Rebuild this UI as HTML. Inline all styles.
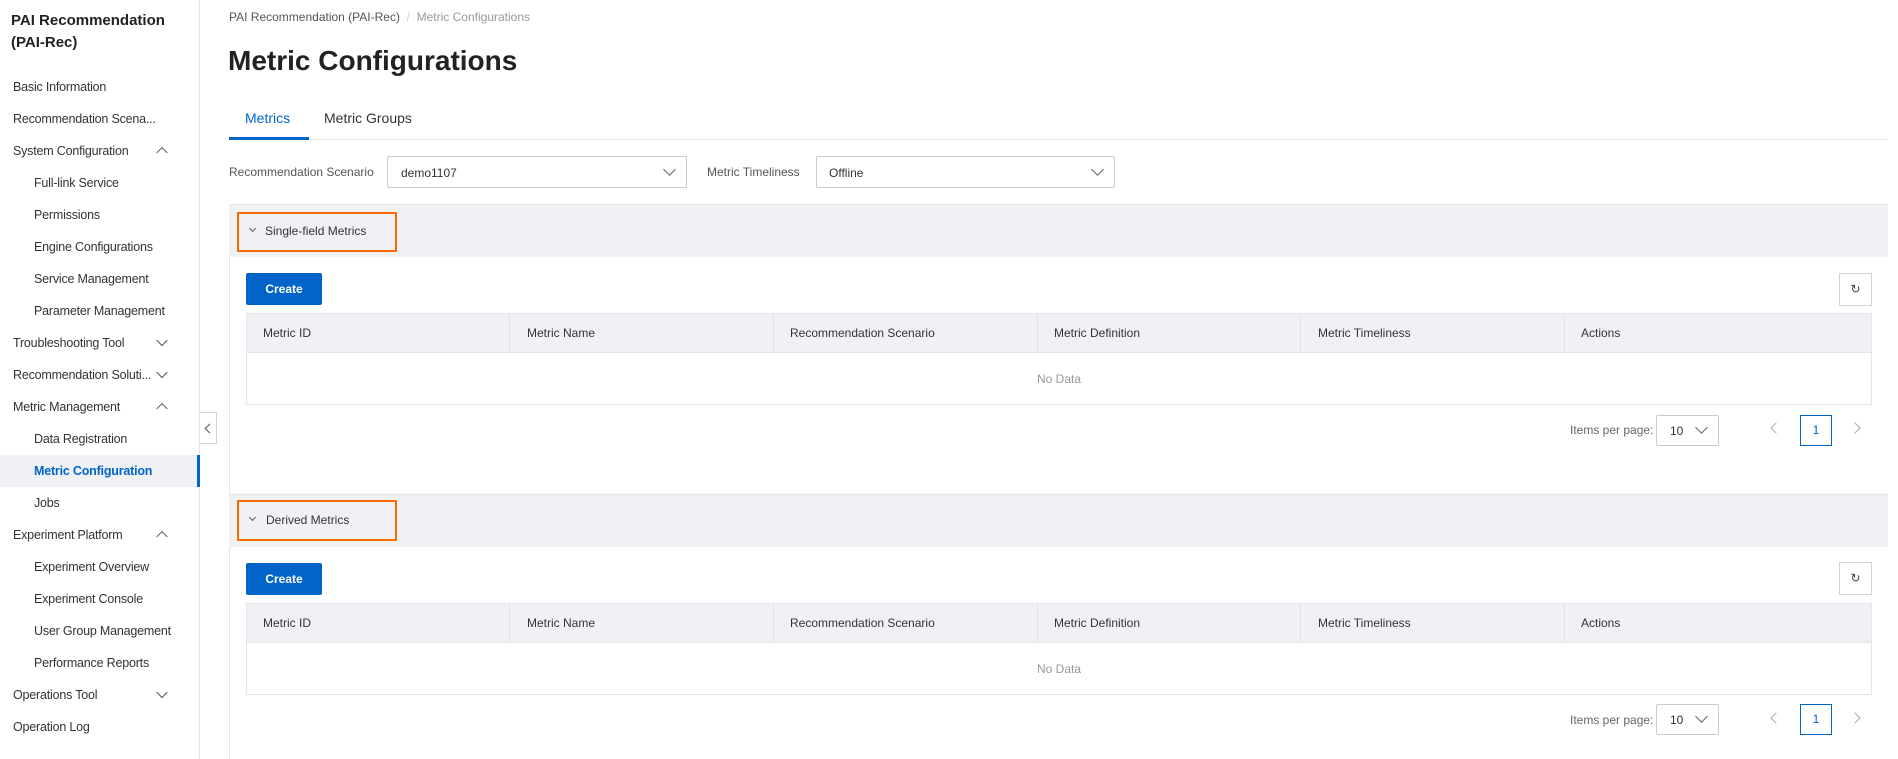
<!DOCTYPE html>
<html><head><meta charset="utf-8"><style>
*{box-sizing:border-box;margin:0;padding:0}
body{width:1898px;height:759px;overflow:hidden;background:#fff;font-family:"Liberation Sans",sans-serif;color:#333;font-size:12px;position:relative}
.abs{position:absolute}
.side{left:0;top:0;width:200px;height:759px;border-right:1px solid #e3e5e8;background:#fff}
.si{position:absolute;left:13px;font-size:12.5px;color:#333;white-space:nowrap;transform:translateY(-50%);letter-spacing:-0.2px}
.si.sub{left:34px}
.car{position:absolute;left:158px;width:8px;height:8px;border-left:1.5px solid #555;border-top:1.5px solid #555}
.up{transform:translateY(-30%) rotate(45deg)}
.down{transform:translateY(-80%) rotate(225deg)}
.sel{border:1px solid #c8ccd2;background:#fff;border-radius:2px}
.chev{position:absolute;width:9px;height:9px;border-right:1.3px solid #666;border-bottom:1.3px solid #666;transform:rotate(45deg)}
.ph{background:#eff1f5}
.orange{border:2px solid #ff6a00}
.btn{background:#0064c8;color:#fff;font-weight:bold;font-size:12px;text-align:center;border-radius:2px}
.th{background:#eff1f5;border:1px solid #e3e5e8}
.col{position:absolute;top:0;height:100%;border-left:1px solid #e0e3e8}
.ct{position:absolute;font-size:12px;color:#333;transform:translateY(-50%)}
.sm{position:absolute;width:5px;height:5px;border-right:1.2px solid #555;border-bottom:1.2px solid #555;transform:rotate(45deg)}
</style></head><body>
<div class="abs side">
<div class="abs" style="left:11px;top:10px;font-weight:bold;font-size:15px;line-height:22px;color:#222">PAI Recommendation<br>(PAI-Rec)</div>
<div class="abs" style="left:0;top:455px;width:200px;height:32px;background:#eff1f5;border-right:3px solid #0064c8"></div>
<div class="si" style="top:87px">Basic Information</div>
<div class="si" style="top:119px">Recommendation Scena...</div>
<div class="si" style="top:151px">System Configuration</div><div class="car up" style="top:151px"></div>
<div class="si sub" style="top:183px">Full-link Service</div>
<div class="si sub" style="top:215px">Permissions</div>
<div class="si sub" style="top:247px">Engine Configurations</div>
<div class="si sub" style="top:279px">Service Management</div>
<div class="si sub" style="top:311px">Parameter Management</div>
<div class="si" style="top:343px">Troubleshooting Tool</div><div class="car down" style="top:343px"></div>
<div class="si" style="top:375px">Recommendation Soluti...</div><div class="car down" style="top:375px"></div>
<div class="si" style="top:407px">Metric Management</div><div class="car up" style="top:407px"></div>
<div class="si sub" style="top:439px">Data Registration</div>
<div class="si sub" style="top:471px;color:#0064c8;font-weight:bold">Metric Configuration</div>
<div class="si sub" style="top:503px">Jobs</div>
<div class="si" style="top:535px">Experiment Platform</div><div class="car up" style="top:535px"></div>
<div class="si sub" style="top:567px">Experiment Overview</div>
<div class="si sub" style="top:599px">Experiment Console</div>
<div class="si sub" style="top:631px">User Group Management</div>
<div class="si sub" style="top:663px">Performance Reports</div>
<div class="si" style="top:695px">Operations Tool</div><div class="car down" style="top:695px"></div>
<div class="si" style="top:727px">Operation Log</div>
</div>
<div class="abs" style="left:200px;top:412px;width:17px;height:32px;border:1px solid #d0d3d8;border-left:none;background:#fff"><div style="position:absolute;left:6px;top:12px;width:7px;height:7px;border-left:1.3px solid #555;border-bottom:1.3px solid #555;transform:rotate(45deg)"></div></div>

<div class="abs" style="left:229px;top:10px;font-size:12px;color:#555">PAI Recommendation (PAI-Rec) &nbsp;<span style="color:#ccc">/</span>&nbsp; <span style="color:#999">Metric Configurations</span></div>
<div class="abs" style="left:228px;top:45px;font-size:28px;font-weight:bold;color:#222">Metric Configurations</div>
<div class="abs" style="left:229px;top:139px;width:1659px;height:1px;background:#e3e5e8"></div>
<div class="abs" style="left:229px;top:137px;width:80px;height:3px;background:#0064c8"></div>
<div class="abs" style="left:245px;top:110px;font-size:14px;color:#0064c8">Metrics</div>
<div class="abs" style="left:324px;top:110px;font-size:14px;color:#333">Metric Groups</div>

<div class="abs" style="left:229px;top:165px;font-size:12px;color:#555">Recommendation Scenario</div>
<div class="abs sel" style="left:387px;top:156px;width:300px;height:32px"><span style="position:absolute;left:13px;top:9px">demo1107</span><div class="chev" style="right:12px;top:8px"></div></div>
<div class="abs" style="left:707px;top:165px;font-size:12px;color:#555">Metric Timeliness</div>
<div class="abs sel" style="left:816px;top:156px;width:299px;height:32px"><span style="position:absolute;left:12px;top:9px">Offline</span><div class="chev" style="right:12px;top:8px"></div></div>

<!-- panel 1 -->
<div class="abs" style="left:229px;top:204px;width:1659px;height:290px;border-left:1px solid #e3e5e8"></div>
<div class="abs ph" style="left:229px;top:204px;width:1659px;height:53px;border-top:1px solid #e3e5e8"></div>
<div class="abs orange" style="left:237px;top:212px;width:160px;height:40px"></div>
<div class="sm" style="left:250px;top:226px"></div>
<div class="abs" style="left:265px;top:224px;font-size:12px;color:#333">Single-field Metrics</div>
<div class="abs btn" style="left:246px;top:273px;width:76px;height:32px;line-height:32px">Create</div>
<div class="abs" style="left:1839px;top:273px;width:33px;height:33px;border:1px solid #d0d3d8;text-align:center;line-height:31px;font-size:12px;color:#444">&#8635;</div>
<div class="abs" style="left:246px;top:313px;width:1626px;height:92px;border:1px solid #e3e5e8"></div>
<div class="abs th" style="left:246px;top:313px;width:1626px;height:40px">
<div class="col" style="left:262px"></div><div class="col" style="left:526px"></div><div class="col" style="left:790px"></div><div class="col" style="left:1053px"></div><div class="col" style="left:1317px"></div>
<div class="ct" style="left:16px;top:19px">Metric ID</div><div class="ct" style="left:280px;top:19px">Metric Name</div><div class="ct" style="left:543px;top:19px">Recommendation Scenario</div><div class="ct" style="left:807px;top:19px">Metric Definition</div><div class="ct" style="left:1071px;top:19px">Metric Timeliness</div><div class="ct" style="left:1334px;top:19px">Actions</div>
</div>
<div class="abs" style="left:1037px;top:372px;font-size:12px;color:#999">No Data</div>
<div class="abs" style="left:1570px;top:423px;font-size:12px;color:#666">Items per page:</div>
<div class="abs sel" style="left:1656px;top:415px;width:63px;height:31px"><span style="position:absolute;left:13px;top:8px">10</span><div class="chev" style="right:12px;top:7px"></div></div>
<div class="abs" style="left:1772px;top:424px;width:8px;height:8px;border-left:1.3px solid #aaa;border-bottom:1.3px solid #aaa;transform:rotate(45deg)"></div>
<div class="abs" style="left:1800px;top:415px;width:32px;height:31px;border:1px solid #0064c8;color:#0064c8;text-align:center;line-height:29px">1</div>
<div class="abs" style="left:1851px;top:424px;width:8px;height:8px;border-right:1.3px solid #aaa;border-top:1.3px solid #aaa;transform:rotate(45deg)"></div>

<!-- panel 2 -->
<div class="abs" style="left:229px;top:494px;width:1659px;height:265px;border-left:1px solid #e3e5e8"></div>
<div class="abs ph" style="left:229px;top:494px;width:1659px;height:53px;border-top:1px solid #e3e5e8"></div>
<div class="abs orange" style="left:237px;top:500px;width:160px;height:41px"></div>
<div class="sm" style="left:250px;top:515px"></div>
<div class="abs" style="left:266px;top:513px;font-size:12px;color:#333">Derived Metrics</div>
<div class="abs btn" style="left:246px;top:563px;width:76px;height:32px;line-height:32px">Create</div>
<div class="abs" style="left:1839px;top:562px;width:33px;height:33px;border:1px solid #d0d3d8;text-align:center;line-height:31px;font-size:12px;color:#444">&#8635;</div>
<div class="abs" style="left:246px;top:603px;width:1626px;height:92px;border:1px solid #e3e5e8"></div>
<div class="abs th" style="left:246px;top:603px;width:1626px;height:40px">
<div class="col" style="left:262px"></div><div class="col" style="left:526px"></div><div class="col" style="left:790px"></div><div class="col" style="left:1053px"></div><div class="col" style="left:1317px"></div>
<div class="ct" style="left:16px;top:19px">Metric ID</div><div class="ct" style="left:280px;top:19px">Metric Name</div><div class="ct" style="left:543px;top:19px">Recommendation Scenario</div><div class="ct" style="left:807px;top:19px">Metric Definition</div><div class="ct" style="left:1071px;top:19px">Metric Timeliness</div><div class="ct" style="left:1334px;top:19px">Actions</div>
</div>
<div class="abs" style="left:1037px;top:662px;font-size:12px;color:#999">No Data</div>
<div class="abs" style="left:1570px;top:713px;font-size:12px;color:#666">Items per page:</div>
<div class="abs sel" style="left:1656px;top:704px;width:63px;height:31px"><span style="position:absolute;left:13px;top:8px">10</span><div class="chev" style="right:12px;top:7px"></div></div>
<div class="abs" style="left:1772px;top:714px;width:8px;height:8px;border-left:1.3px solid #aaa;border-bottom:1.3px solid #aaa;transform:rotate(45deg)"></div>
<div class="abs" style="left:1800px;top:704px;width:32px;height:31px;border:1px solid #0064c8;color:#0064c8;text-align:center;line-height:29px">1</div>
<div class="abs" style="left:1851px;top:714px;width:8px;height:8px;border-right:1.3px solid #aaa;border-top:1.3px solid #aaa;transform:rotate(45deg)"></div>
</body></html>
